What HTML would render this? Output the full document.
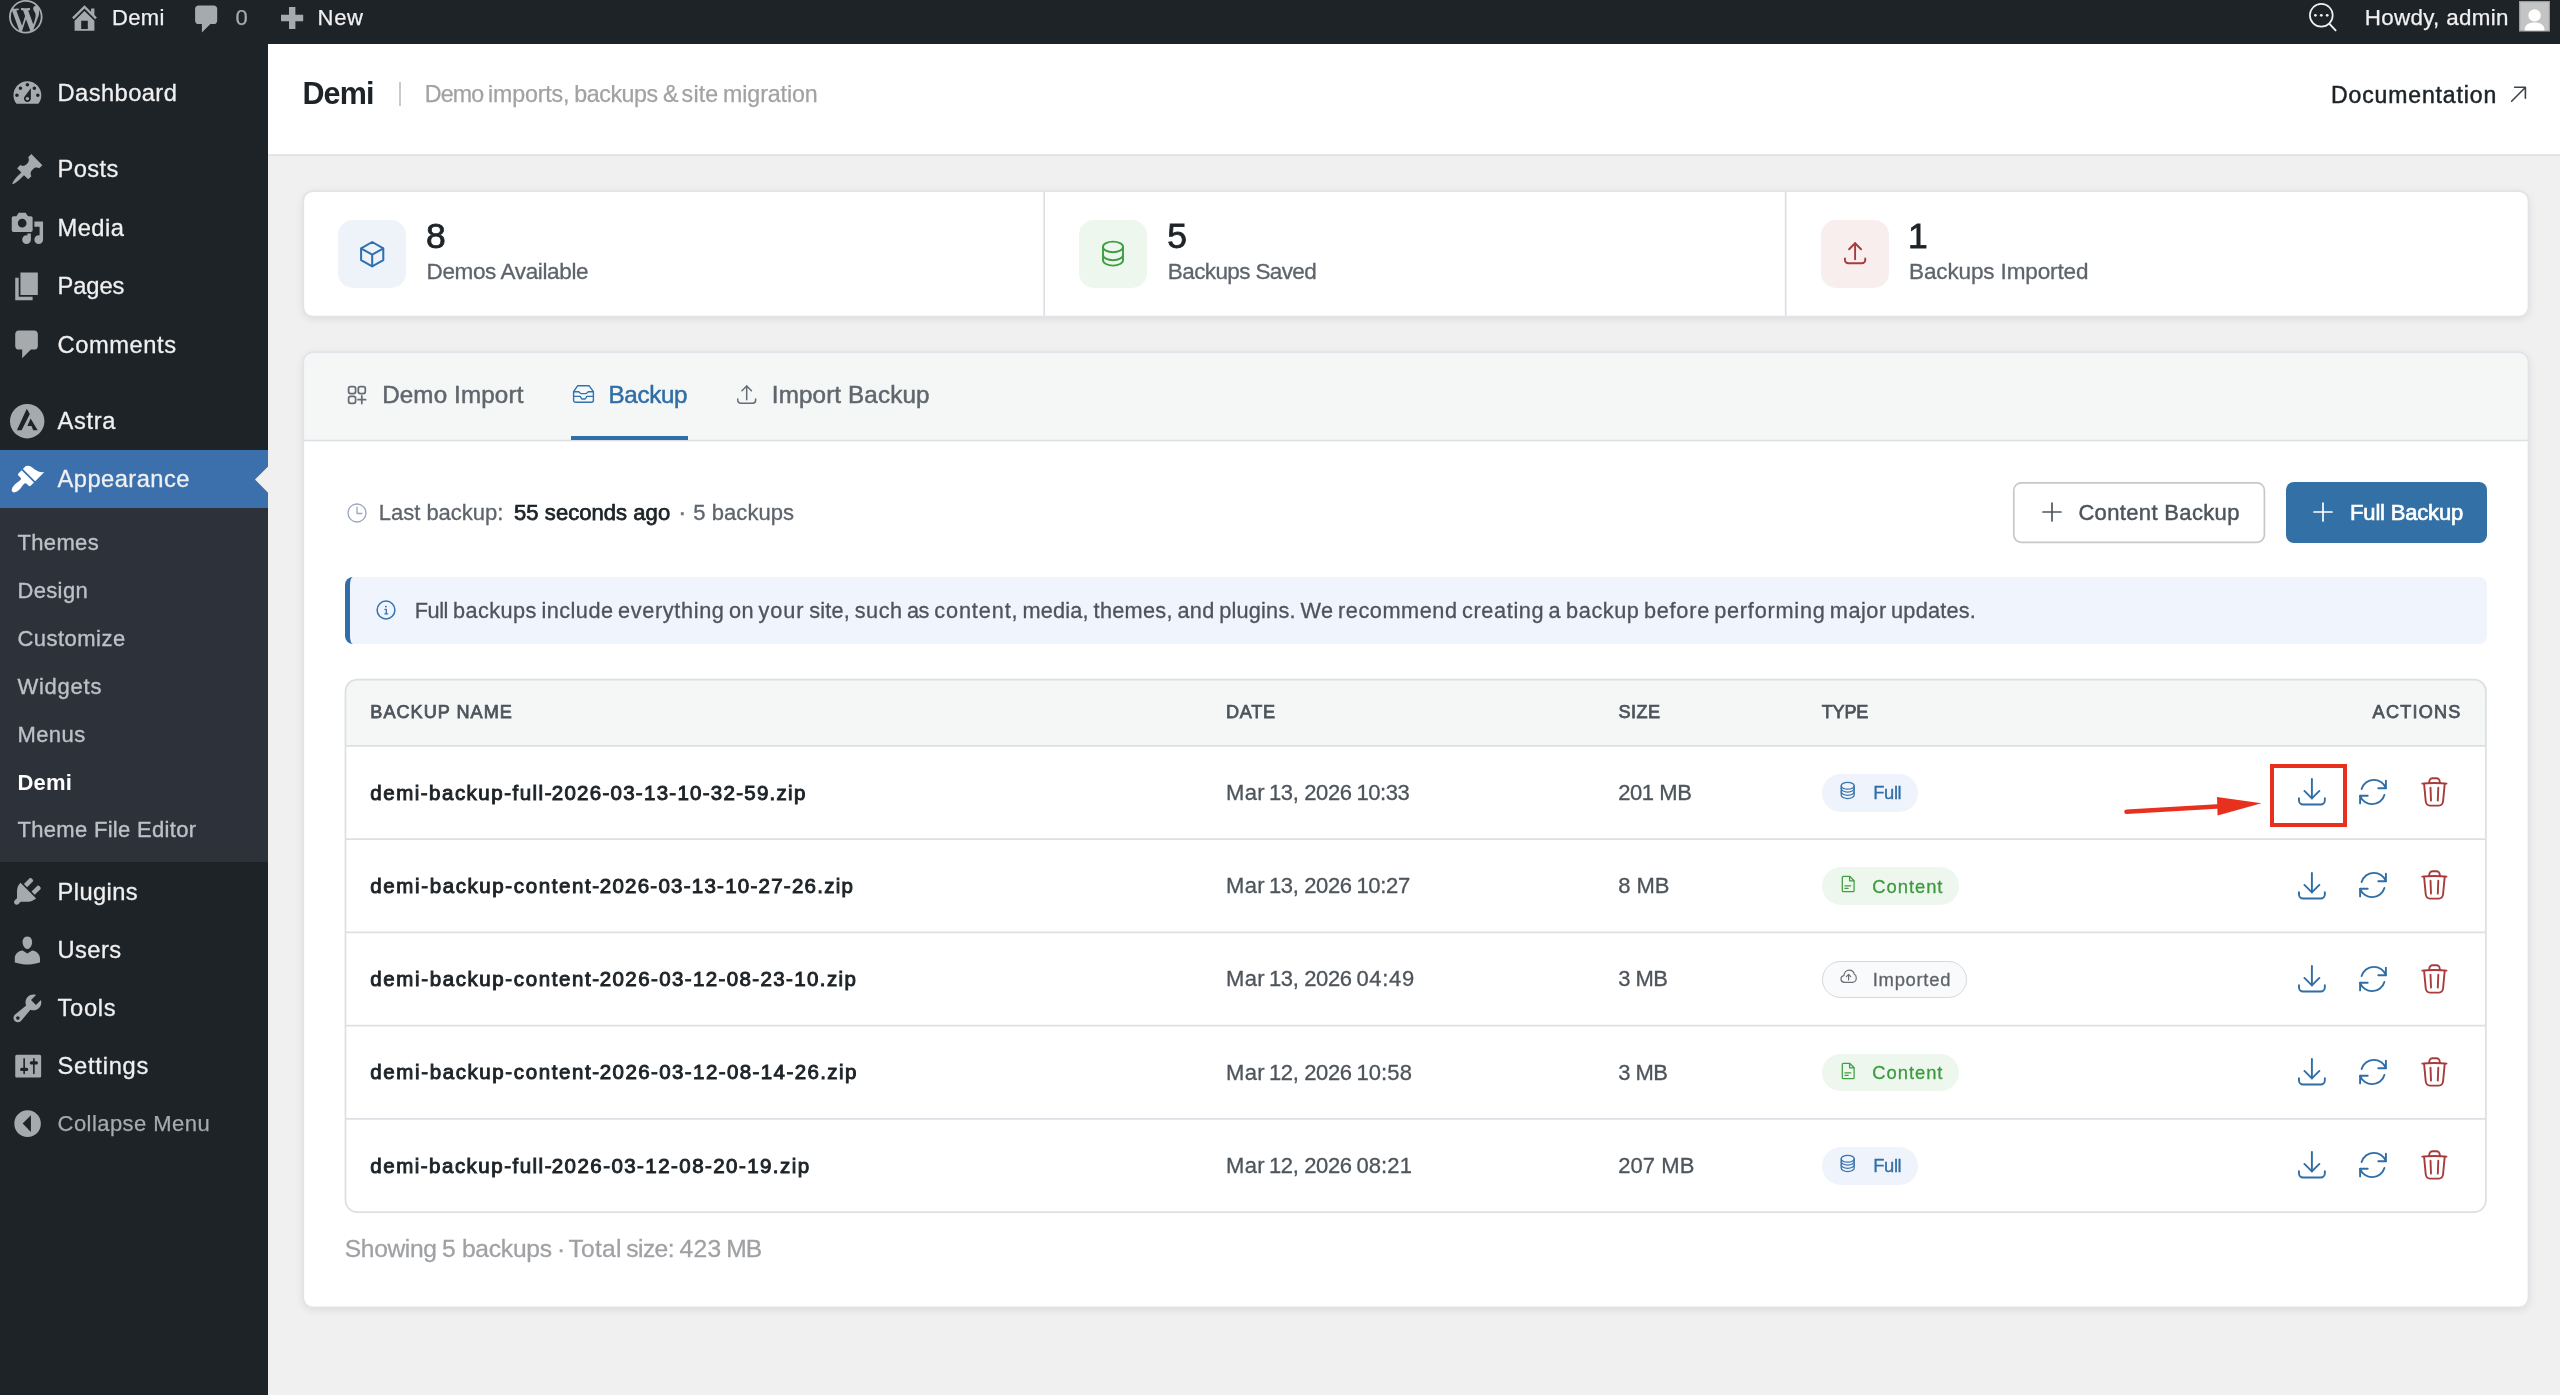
<!DOCTYPE html>
<html lang="en"><head><meta charset="utf-8"><title>Demi - Backup</title>
<style>
html,body{margin:0;padding:0;}
body{width:2560px;height:1395px;overflow:hidden;background:#f0f0f1;position:relative;font-family:"Liberation Sans", sans-serif;}
#w{position:absolute;left:0;top:0;width:2560px;height:1395px;will-change:transform;}
#w>div,#w>svg,#w>span{position:absolute;box-sizing:border-box;}
.t{white-space:nowrap;line-height:1;font-family:"Liberation Sans", sans-serif;}
svg{overflow:visible;}
</style></head><body><div id="w">
<div style="left:268px;top:44px;width:2292px;height:111px;background:#fff;"></div>
<svg style="left:0px;top:0px;" width="2560" height="1395" viewBox="0 0 2560 1395"><path d="M268 155.2 H2560" stroke="#dfe1e5" stroke-width="1.7" fill="none"/></svg>
<div style="left:303px;top:191px;width:2226px;height:126px;background:#fff;border-radius:10px;box-shadow:0 2px 8px rgba(0,0,0,.09);"></div>
<svg style="left:0px;top:0px;pointer-events:none;" width="2560" height="1395" viewBox="0 0 2560 1395"><rect x="303.3" y="191.1" width="2225.20" height="125.50" rx="9.5" fill="none" stroke="#e1e3e8" stroke-width="1.7"/></svg>
<svg style="left:0px;top:0px;" width="2560" height="1395" viewBox="0 0 2560 1395"><path d="M1044.2 192 V315.8" stroke="#dcdfe4" stroke-width="1.7" fill="none"/></svg>
<svg style="left:0px;top:0px;" width="2560" height="1395" viewBox="0 0 2560 1395"><path d="M1785.7 192 V315.8" stroke="#dcdfe4" stroke-width="1.7" fill="none"/></svg>
<div style="left:338px;top:220px;width:68px;height:68px;background:#eef3f9;border-radius:15px;"></div>
<div style="left:1079px;top:220px;width:68px;height:68px;background:#edf7ee;border-radius:15px;"></div>
<div style="left:1821px;top:220px;width:68px;height:68px;background:#f9eeee;border-radius:15px;"></div>
<div style="left:303px;top:352px;width:2226px;height:956px;background:#fff;border-radius:10px;overflow:hidden;box-shadow:0 2px 8px rgba(0,0,0,.09);"><div style="position:absolute;left:0;top:0;right:0;height:88.5px;background:#f5f7f7;"></div></div>
<svg style="left:0px;top:0px;" width="2560" height="1395" viewBox="0 0 2560 1395"><path d="M304 440.5 H2528" stroke="#dcdfe4" stroke-width="1.7" fill="none"/></svg>
<svg style="left:0px;top:0px;pointer-events:none;" width="2560" height="1395" viewBox="0 0 2560 1395"><rect x="303.3" y="352.2" width="2225.20" height="955.10" rx="9.5" fill="none" stroke="#e1e3e8" stroke-width="1.7"/></svg>
<div style="left:571px;top:436px;width:117px;height:4px;background:#2f6ea6;"></div>
<div style="left:2013px;top:482px;width:252px;height:61px;background:#fff;border-radius:8px;"></div>
<svg style="left:0px;top:0px;pointer-events:none;" width="2560" height="1395" viewBox="0 0 2560 1395"><rect x="2013.8" y="482.8" width="250.60" height="59.50" rx="7.5" fill="none" stroke="#c6c8cc" stroke-width="1.7"/></svg>
<div style="left:2286px;top:482px;width:201px;height:61px;background:#3270a5;border-radius:8px;"></div>
<div style="left:345px;top:577px;width:2142px;height:67px;background:#eff4fd;border-left:5px solid #2f6ea6;border-radius:8px;"></div>
<div style="left:345px;top:679px;width:2141.5px;height:533.5px;background:#fff;border-radius:12px;overflow:hidden;"><div style="position:absolute;left:0;top:0;right:0;height:66.9px;background:#f5f7f7;"></div></div>
<svg style="left:0px;top:0px;" width="2560" height="1395" viewBox="0 0 2560 1395"><path d="M345.46 745.9 H2485.9" stroke="#dcdfe4" stroke-width="1.7" fill="none"/></svg>
<svg style="left:0px;top:0px;" width="2560" height="1395" viewBox="0 0 2560 1395"><path d="M345.46 839.15 H2485.9" stroke="#dcdfe4" stroke-width="1.7" fill="none"/></svg>
<svg style="left:0px;top:0px;" width="2560" height="1395" viewBox="0 0 2560 1395"><path d="M345.46 932.4 H2485.9" stroke="#dcdfe4" stroke-width="1.7" fill="none"/></svg>
<svg style="left:0px;top:0px;" width="2560" height="1395" viewBox="0 0 2560 1395"><path d="M345.46 1025.65 H2485.9" stroke="#dcdfe4" stroke-width="1.7" fill="none"/></svg>
<svg style="left:0px;top:0px;" width="2560" height="1395" viewBox="0 0 2560 1395"><path d="M345.46 1118.9 H2485.9" stroke="#dcdfe4" stroke-width="1.7" fill="none"/></svg>
<svg style="left:0px;top:0px;pointer-events:none;" width="2560" height="1395" viewBox="0 0 2560 1395"><rect x="345.46" y="679.6" width="2140.44" height="532.50" rx="12" fill="none" stroke="#dcdfe4" stroke-width="1.7"/></svg>
<div style="left:0px;top:0px;width:2560px;height:44px;background:#1d2327;"></div>
<div style="left:0px;top:44px;width:268px;height:1351px;background:#1d2327;"></div>
<div style="left:0px;top:450px;width:268px;height:58px;background:#3c70ad;"></div>
<div style="left:0px;top:508px;width:268px;height:354px;background:#2d323a;"></div>
<svg style="left:254.5px;top:465.8px;" width="13.6" height="27.2" viewBox="0 0 13.6 27.2"><path d="M13.6 0 L0 13.6 L13.6 27.2 Z" fill="#f0f0f1"/></svg>
<span class="t" style="top:7.48px;font-size:22px;color:#f0f0f1;letter-spacing:0.335px;-webkit-text-stroke:0.25px #f0f0f1;left:112.09px;">Demi</span>
<span class="t" style="top:7.48px;font-size:22px;color:#a7aaad;-webkit-text-stroke:0.25px #a7aaad;left:235.39px;">0</span>
<span class="t" style="top:7.48px;font-size:22px;color:#f0f0f1;letter-spacing:0.667px;-webkit-text-stroke:0.25px #f0f0f1;left:317.59px;">New</span>
<span class="t" style="top:6.64px;font-size:22.4px;color:#f0f0f1;letter-spacing:0.333px;-webkit-text-stroke:0.25px #f0f0f1;left:2364.67px;">Howdy, admin</span>
<span class="t" style="top:82.44px;font-size:23.7px;color:#f0f0f1;letter-spacing:0.436px;-webkit-text-stroke:0.3px #f0f0f1;left:57.50px;">Dashboard</span>
<span class="t" style="top:158.44px;font-size:23.7px;color:#f0f0f1;letter-spacing:0.407px;-webkit-text-stroke:0.3px #f0f0f1;left:57.50px;">Posts</span>
<span class="t" style="top:217.14px;font-size:23.7px;color:#f0f0f1;letter-spacing:0.462px;-webkit-text-stroke:0.3px #f0f0f1;left:57.50px;">Media</span>
<span class="t" style="top:275.04px;font-size:23.7px;color:#f0f0f1;letter-spacing:-0.074px;-webkit-text-stroke:0.3px #f0f0f1;left:57.50px;">Pages</span>
<span class="t" style="top:333.54px;font-size:23.7px;color:#f0f0f1;letter-spacing:0.578px;-webkit-text-stroke:0.3px #f0f0f1;left:57.50px;">Comments</span>
<span class="t" style="top:410.04px;font-size:23.7px;color:#f0f0f1;letter-spacing:0.645px;-webkit-text-stroke:0.3px #f0f0f1;left:57.50px;">Astra</span>
<span class="t" style="top:467.74px;font-size:23.7px;color:#f0f0f1;letter-spacing:0.459px;-webkit-text-stroke:0.3px #f0f0f1;left:57.50px;">Appearance</span>
<span class="t" style="top:880.54px;font-size:23.7px;color:#f0f0f1;letter-spacing:0.412px;-webkit-text-stroke:0.3px #f0f0f1;left:57.50px;">Plugins</span>
<span class="t" style="top:938.94px;font-size:23.7px;color:#f0f0f1;letter-spacing:0.455px;-webkit-text-stroke:0.3px #f0f0f1;left:57.50px;">Users</span>
<span class="t" style="top:997.14px;font-size:23.7px;color:#f0f0f1;letter-spacing:0.695px;-webkit-text-stroke:0.3px #f0f0f1;left:57.50px;">Tools</span>
<span class="t" style="top:1055.44px;font-size:23.7px;color:#f0f0f1;letter-spacing:0.755px;-webkit-text-stroke:0.3px #f0f0f1;left:57.50px;">Settings</span>
<span class="t" style="top:1112.58px;font-size:22px;color:#a7aaad;letter-spacing:0.442px;-webkit-text-stroke:0.25px #a7aaad;left:57.59px;">Collapse Menu</span>
<span class="t" style="top:532.38px;font-size:22px;color:#bcc1c7;letter-spacing:0.373px;-webkit-text-stroke:0.35px #bcc1c7;left:17.39px;">Themes</span>
<span class="t" style="top:580.21px;font-size:22px;color:#bcc1c7;letter-spacing:0.373px;-webkit-text-stroke:0.35px #bcc1c7;left:17.39px;">Design</span>
<span class="t" style="top:628.04px;font-size:22px;color:#bcc1c7;letter-spacing:0.479px;-webkit-text-stroke:0.35px #bcc1c7;left:17.39px;">Customize</span>
<span class="t" style="top:675.87px;font-size:22px;color:#bcc1c7;letter-spacing:0.778px;-webkit-text-stroke:0.35px #bcc1c7;left:17.39px;">Widgets</span>
<span class="t" style="top:723.70px;font-size:22px;color:#bcc1c7;letter-spacing:0.451px;-webkit-text-stroke:0.35px #bcc1c7;left:17.39px;">Menus</span>
<span class="t" style="top:771.53px;font-size:22px;color:#fff;font-weight:700;letter-spacing:0.251px;left:17.39px;">Demi</span>
<span class="t" style="top:819.36px;font-size:22px;color:#bcc1c7;letter-spacing:0.320px;-webkit-text-stroke:0.35px #bcc1c7;left:17.39px;">Theme File Editor</span>
<span class="t" style="top:78.48px;font-size:30.5px;color:#1d2327;font-weight:700;letter-spacing:-0.869px;left:302.42px;">Demi</span>
<div style="left:399px;top:82px;width:1.6px;height:24px;background:#c9cacc;"></div>
<span class="t" style="top:82.86px;font-size:23.2px;color:#a1a2a4;letter-spacing:-0.800px;-webkit-text-stroke:0.25px #a1a2a4;left:424.72px;">Demo</span>
<span class="t" style="top:82.86px;font-size:23.2px;color:#a1a2a4;letter-spacing:-0.147px;-webkit-text-stroke:0.25px #a1a2a4;left:488.02px;">imports,</span>
<span class="t" style="top:82.86px;font-size:23.2px;color:#a1a2a4;letter-spacing:-0.423px;-webkit-text-stroke:0.25px #a1a2a4;left:574.32px;">backups</span>
<span class="t" style="top:82.86px;font-size:23.2px;color:#a1a2a4;-webkit-text-stroke:0.25px #a1a2a4;left:663.02px;">&amp;</span>
<span class="t" style="top:82.86px;font-size:23.2px;color:#a1a2a4;letter-spacing:0.182px;-webkit-text-stroke:0.25px #a1a2a4;left:681.62px;">site</span>
<span class="t" style="top:82.86px;font-size:23.2px;color:#a1a2a4;letter-spacing:-0.104px;-webkit-text-stroke:0.25px #a1a2a4;left:723.12px;">migration</span>
<span class="t" style="top:84.33px;font-size:23px;color:#1d2327;letter-spacing:0.877px;-webkit-text-stroke:0.5px #1d2327;left:2331.04px;">Documentation</span>
<span class="t" style="top:219.05px;font-size:35.5px;color:#1d2327;-webkit-text-stroke:0.8px #1d2327;left:425.95px;">8</span>
<span class="t" style="top:219.05px;font-size:35.5px;color:#1d2327;-webkit-text-stroke:0.8px #1d2327;left:1167.25px;">5</span>
<span class="t" style="top:219.05px;font-size:35.5px;color:#1d2327;-webkit-text-stroke:0.8px #1d2327;left:1908.05px;">1</span>
<span class="t" style="top:260.75px;font-size:22.5px;color:#5e646b;letter-spacing:-0.371px;-webkit-text-stroke:0.3px #5e646b;left:426.56px;">Demos Available</span>
<span class="t" style="top:260.75px;font-size:22.5px;color:#5e646b;letter-spacing:-0.623px;-webkit-text-stroke:0.3px #5e646b;left:1167.86px;">Backups Saved</span>
<span class="t" style="top:260.75px;font-size:22.5px;color:#5e646b;letter-spacing:-0.130px;-webkit-text-stroke:0.3px #5e646b;left:1909.06px;">Backups Imported</span>
<span class="t" style="top:382.71px;font-size:24.2px;color:#60666d;letter-spacing:0.142px;-webkit-text-stroke:0.5px #60666d;left:382.17px;">Demo Import</span>
<span class="t" style="top:382.71px;font-size:24.2px;color:#2f6ea6;letter-spacing:-0.334px;-webkit-text-stroke:0.5px #2f6ea6;left:608.47px;">Backup</span>
<span class="t" style="top:382.71px;font-size:24.2px;color:#60666d;letter-spacing:0.147px;-webkit-text-stroke:0.5px #60666d;left:771.77px;">Import Backup</span>
<span class="t" style="top:502.18px;font-size:22px;color:#5e646b;letter-spacing:-0.018px;-webkit-text-stroke:0.3px #5e646b;left:378.79px;">Last backup:</span>
<span class="t" style="top:502.18px;font-size:22px;color:#1d2327;letter-spacing:0.054px;-webkit-text-stroke:0.75px #1d2327;left:514.09px;">55 seconds ago</span>
<span class="t" style="top:500.08px;font-size:24px;color:#70757b;-webkit-text-stroke:0.5px #70757b;left:678.18px;">·</span>
<span class="t" style="top:502.18px;font-size:22px;color:#5e646b;letter-spacing:0.057px;-webkit-text-stroke:0.3px #5e646b;left:693.29px;">5 backups</span>
<span class="t" style="top:501.78px;font-size:22px;color:#4d545b;letter-spacing:0.346px;-webkit-text-stroke:0.45px #4d545b;left:2078.39px;">Content Backup</span>
<span class="t" style="top:501.78px;font-size:22px;color:#fff;letter-spacing:-0.180px;-webkit-text-stroke:0.65px #fff;left:2350.09px;">Full Backup</span>
<span class="t" style="top:599.53px;font-size:21.7px;color:#4d545b;letter-spacing:-0.450px;-webkit-text-stroke:0.3px #4d545b;left:414.81px;">Full</span>
<span class="t" style="top:599.53px;font-size:21.7px;color:#4d545b;letter-spacing:0.449px;-webkit-text-stroke:0.3px #4d545b;left:452.96px;">backups</span>
<span class="t" style="top:599.53px;font-size:21.7px;color:#4d545b;letter-spacing:0.474px;-webkit-text-stroke:0.3px #4d545b;left:541.41px;">include</span>
<span class="t" style="top:599.53px;font-size:21.7px;color:#4d545b;letter-spacing:0.657px;-webkit-text-stroke:0.3px #4d545b;left:617.96px;">everything</span>
<span class="t" style="top:599.53px;font-size:21.7px;color:#4d545b;letter-spacing:0.602px;-webkit-text-stroke:0.3px #4d545b;left:728.91px;">on</span>
<span class="t" style="top:599.53px;font-size:21.7px;color:#4d545b;letter-spacing:0.850px;-webkit-text-stroke:0.3px #4d545b;left:758.61px;">your</span>
<span class="t" style="top:599.53px;font-size:21.7px;color:#4d545b;letter-spacing:0.212px;-webkit-text-stroke:0.3px #4d545b;left:809.21px;">site,</span>
<span class="t" style="top:599.53px;font-size:21.7px;color:#4d545b;letter-spacing:0.472px;-webkit-text-stroke:0.3px #4d545b;left:854.81px;">such</span>
<span class="t" style="top:599.53px;font-size:21.7px;color:#4d545b;letter-spacing:-0.450px;-webkit-text-stroke:0.3px #4d545b;left:907.01px;">as</span>
<span class="t" style="top:599.53px;font-size:21.7px;color:#4d545b;letter-spacing:0.894px;-webkit-text-stroke:0.3px #4d545b;left:934.21px;">content,</span>
<span class="t" style="top:599.53px;font-size:21.7px;color:#4d545b;letter-spacing:0.184px;-webkit-text-stroke:0.3px #4d545b;left:1022.61px;">media,</span>
<span class="t" style="top:599.53px;font-size:21.7px;color:#4d545b;letter-spacing:0.279px;-webkit-text-stroke:0.3px #4d545b;left:1093.61px;">themes,</span>
<span class="t" style="top:599.53px;font-size:21.7px;color:#4d545b;letter-spacing:0.320px;-webkit-text-stroke:0.3px #4d545b;left:1177.41px;">and</span>
<span class="t" style="top:599.53px;font-size:21.7px;color:#4d545b;letter-spacing:0.216px;-webkit-text-stroke:0.3px #4d545b;left:1219.21px;">plugins.</span>
<span class="t" style="top:599.53px;font-size:21.7px;color:#4d545b;letter-spacing:0.387px;-webkit-text-stroke:0.3px #4d545b;left:1300.46px;">We</span>
<span class="t" style="top:599.53px;font-size:21.7px;color:#4d545b;letter-spacing:0.570px;-webkit-text-stroke:0.3px #4d545b;left:1337.96px;">recommend</span>
<span class="t" style="top:599.53px;font-size:21.7px;color:#4d545b;letter-spacing:0.639px;-webkit-text-stroke:0.3px #4d545b;left:1462.01px;">creating</span>
<span class="t" style="top:599.53px;font-size:21.7px;color:#4d545b;-webkit-text-stroke:0.3px #4d545b;left:1548.61px;">a</span>
<span class="t" style="top:599.53px;font-size:21.7px;color:#4d545b;letter-spacing:0.578px;-webkit-text-stroke:0.3px #4d545b;left:1566.11px;">backup</span>
<span class="t" style="top:599.53px;font-size:21.7px;color:#4d545b;letter-spacing:0.765px;-webkit-text-stroke:0.3px #4d545b;left:1643.91px;">before</span>
<span class="t" style="top:599.53px;font-size:21.7px;color:#4d545b;letter-spacing:0.773px;-webkit-text-stroke:0.3px #4d545b;left:1714.21px;">performing</span>
<span class="t" style="top:599.53px;font-size:21.7px;color:#4d545b;letter-spacing:0.523px;-webkit-text-stroke:0.3px #4d545b;left:1829.81px;">major</span>
<span class="t" style="top:599.53px;font-size:21.7px;color:#4d545b;letter-spacing:0.203px;-webkit-text-stroke:0.3px #4d545b;left:1891.11px;">updates.</span>
<span class="t" style="top:702.88px;font-size:18.1px;color:#4d545b;letter-spacing:1.017px;-webkit-text-stroke:0.75px #4d545b;left:370.30px;">BACKUP NAME</span>
<span class="t" style="top:702.88px;font-size:18.1px;color:#4d545b;letter-spacing:0.745px;-webkit-text-stroke:0.75px #4d545b;left:1226.00px;">DATE</span>
<span class="t" style="top:702.88px;font-size:18.1px;color:#4d545b;letter-spacing:0.446px;-webkit-text-stroke:0.75px #4d545b;left:1618.40px;">SIZE</span>
<span class="t" style="top:702.88px;font-size:18.1px;color:#4d545b;letter-spacing:-0.236px;-webkit-text-stroke:0.75px #4d545b;left:1821.80px;">TYPE</span>
<span class="t" style="top:702.88px;font-size:18.1px;color:#4d545b;letter-spacing:1.220px;-webkit-text-stroke:0.75px #4d545b;left:2372.60px;">ACTIONS</span>
<span class="t" style="top:782.65px;font-size:20.5px;color:#1d2327;letter-spacing:1.494px;-webkit-text-stroke:0.95px #1d2327;left:370.37px;">demi-backup-full-</span>
<span class="t" style="top:782.65px;font-size:20.5px;color:#1d2327;letter-spacing:1.267px;-webkit-text-stroke:0.95px #1d2327;left:551.77px;">2026-03-13-10-32-59.zip</span>
<span class="t" style="top:781.78px;font-size:22px;color:#4d545b;letter-spacing:0.330px;-webkit-text-stroke:0.3px #4d545b;left:1226.09px;">Mar</span>
<span class="t" style="top:781.78px;font-size:22px;color:#4d545b;letter-spacing:-0.370px;-webkit-text-stroke:0.3px #4d545b;left:1268.99px;">13, 2026</span>
<span class="t" style="top:781.78px;font-size:22px;color:#4d545b;letter-spacing:-0.428px;-webkit-text-stroke:0.3px #4d545b;left:1356.39px;">10:33</span>
<span class="t" style="top:781.78px;font-size:22px;color:#4d545b;letter-spacing:-0.436px;-webkit-text-stroke:0.3px #4d545b;left:1618.19px;">201 MB</span>
<span class="t" style="top:875.90px;font-size:20.5px;color:#1d2327;letter-spacing:1.604px;-webkit-text-stroke:0.95px #1d2327;left:370.37px;">demi-backup-content-</span>
<span class="t" style="top:875.90px;font-size:20.5px;color:#1d2327;letter-spacing:1.249px;-webkit-text-stroke:0.95px #1d2327;left:599.77px;">2026-03-13-10-27-26.zip</span>
<span class="t" style="top:875.03px;font-size:22px;color:#4d545b;letter-spacing:0.330px;-webkit-text-stroke:0.3px #4d545b;left:1226.09px;">Mar</span>
<span class="t" style="top:875.03px;font-size:22px;color:#4d545b;letter-spacing:-0.370px;-webkit-text-stroke:0.3px #4d545b;left:1268.99px;">13, 2026</span>
<span class="t" style="top:875.03px;font-size:22px;color:#4d545b;letter-spacing:-0.303px;-webkit-text-stroke:0.3px #4d545b;left:1356.39px;">10:27</span>
<span class="t" style="top:875.03px;font-size:22px;color:#4d545b;letter-spacing:-0.036px;-webkit-text-stroke:0.3px #4d545b;left:1618.19px;">8 MB</span>
<span class="t" style="top:969.15px;font-size:20.5px;color:#1d2327;letter-spacing:1.604px;-webkit-text-stroke:0.95px #1d2327;left:370.37px;">demi-backup-content-</span>
<span class="t" style="top:969.15px;font-size:20.5px;color:#1d2327;letter-spacing:1.386px;-webkit-text-stroke:0.95px #1d2327;left:599.77px;">2026-03-12-08-23-10.zip</span>
<span class="t" style="top:968.28px;font-size:22px;color:#4d545b;letter-spacing:0.330px;-webkit-text-stroke:0.3px #4d545b;left:1226.09px;">Mar</span>
<span class="t" style="top:968.28px;font-size:22px;color:#4d545b;letter-spacing:-0.370px;-webkit-text-stroke:0.3px #4d545b;left:1268.99px;">13, 2026</span>
<span class="t" style="top:968.28px;font-size:22px;color:#4d545b;letter-spacing:0.700px;-webkit-text-stroke:0.3px #4d545b;left:1356.39px;">04:49</span>
<span class="t" style="top:968.28px;font-size:22px;color:#4d545b;letter-spacing:-0.536px;-webkit-text-stroke:0.3px #4d545b;left:1618.19px;">3 MB</span>
<span class="t" style="top:1062.40px;font-size:20.5px;color:#1d2327;letter-spacing:1.604px;-webkit-text-stroke:0.95px #1d2327;left:370.37px;">demi-backup-content-</span>
<span class="t" style="top:1062.40px;font-size:20.5px;color:#1d2327;letter-spacing:1.408px;-webkit-text-stroke:0.95px #1d2327;left:599.77px;">2026-03-12-08-14-26.zip</span>
<span class="t" style="top:1061.53px;font-size:22px;color:#4d545b;letter-spacing:0.330px;-webkit-text-stroke:0.3px #4d545b;left:1226.09px;">Mar</span>
<span class="t" style="top:1061.53px;font-size:22px;color:#4d545b;letter-spacing:-0.370px;-webkit-text-stroke:0.3px #4d545b;left:1268.99px;">12, 2026</span>
<span class="t" style="top:1061.53px;font-size:22px;color:#4d545b;letter-spacing:0.122px;-webkit-text-stroke:0.3px #4d545b;left:1356.39px;">10:58</span>
<span class="t" style="top:1061.53px;font-size:22px;color:#4d545b;letter-spacing:-0.536px;-webkit-text-stroke:0.3px #4d545b;left:1618.19px;">3 MB</span>
<span class="t" style="top:1155.65px;font-size:20.5px;color:#1d2327;letter-spacing:1.494px;-webkit-text-stroke:0.95px #1d2327;left:370.37px;">demi-backup-full-</span>
<span class="t" style="top:1155.65px;font-size:20.5px;color:#1d2327;letter-spacing:1.440px;-webkit-text-stroke:0.95px #1d2327;left:551.77px;">2026-03-12-08-20-19.zip</span>
<span class="t" style="top:1154.78px;font-size:22px;color:#4d545b;letter-spacing:0.330px;-webkit-text-stroke:0.3px #4d545b;left:1226.09px;">Mar</span>
<span class="t" style="top:1154.78px;font-size:22px;color:#4d545b;letter-spacing:-0.370px;-webkit-text-stroke:0.3px #4d545b;left:1268.99px;">12, 2026</span>
<span class="t" style="top:1154.78px;font-size:22px;color:#4d545b;letter-spacing:0.122px;-webkit-text-stroke:0.3px #4d545b;left:1356.39px;">08:21</span>
<span class="t" style="top:1154.78px;font-size:22px;color:#4d545b;letter-spacing:0.084px;-webkit-text-stroke:0.3px #4d545b;left:1618.19px;">207 MB</span>
<span class="t" style="top:1236.88px;font-size:24.6px;color:#9fa1a4;letter-spacing:-0.350px;-webkit-text-stroke:0.3px #9fa1a4;left:344.75px;">Showing</span>
<span class="t" style="top:1236.88px;font-size:24.6px;color:#9fa1a4;-webkit-text-stroke:0.3px #9fa1a4;left:441.95px;">5</span>
<span class="t" style="top:1236.88px;font-size:24.6px;color:#9fa1a4;letter-spacing:-0.244px;-webkit-text-stroke:0.3px #9fa1a4;left:461.95px;">backups</span>
<span class="t" style="top:1236.88px;font-size:24.6px;color:#9fa1a4;-webkit-text-stroke:0.3px #9fa1a4;left:557.05px;">·</span>
<span class="t" style="top:1236.88px;font-size:24.6px;color:#9fa1a4;letter-spacing:0.248px;-webkit-text-stroke:0.3px #9fa1a4;left:568.45px;">Total</span>
<span class="t" style="top:1236.88px;font-size:24.6px;color:#9fa1a4;letter-spacing:-0.608px;-webkit-text-stroke:0.3px #9fa1a4;left:626.35px;">size:</span>
<span class="t" style="top:1236.88px;font-size:24.6px;color:#9fa1a4;letter-spacing:0.400px;-webkit-text-stroke:0.3px #9fa1a4;left:679.45px;">423</span>
<span class="t" style="top:1236.88px;font-size:24.6px;color:#9fa1a4;letter-spacing:-1.100px;-webkit-text-stroke:0.3px #9fa1a4;left:726.35px;">MB</span>
<svg style="left:9.9px;top:76.0px;" width="34.8" height="34.8" viewBox="0 0 20 20"><path d="M3.76 16h12.48c1.1-1.37 1.76-3.11 1.76-5 0-4.42-3.58-8-8-8s-8 3.58-8 8c0 1.89.66 3.63 1.76 5zM10 4c.55 0 1 .45 1 1s-.45 1-1 1-1-.45-1-1 .45-1 1-1zM6 6c.55 0 1 .45 1 1s-.45 1-1 1-1-.45-1-1 .45-1 1-1zm8 0c.55 0 1 .45 1 1s-.45 1-1 1-1-.45-1-1 .45-1 1-1zm-5.37 5.55L12 7v6c0 1.1-.9 2-2 2s-2-.9-2-2c0-.57.24-1.08.63-1.45zM4 10c.55 0 1 .45 1 1s-.45 1-1 1-1-.45-1-1 .45-1 1-1zm12 0c.55 0 1 .45 1 1s-.45 1-1 1-1-.45-1-1 .45-1 1-1zm-5 3c0-.55-.45-1-1-1s-1 .45-1 1 .45 1 1 1 1-.45 1-1z" fill="#a7aaad" fill-rule="evenodd"/></svg>
<svg style="left:9.9px;top:152.0px;" width="34.8" height="34.8" viewBox="0 0 20 20"><path d="M10.44 3.02l1.82-1.82 6.36 6.35-1.83 1.82c-1.05-.68-2.48-.57-3.41.36l-.75.75c-.92.93-1.04 2.35-.35 3.41l-1.83 1.82-2.41-2.41-2.8 2.79c-.42.42-3.38 2.71-3.8 2.29s1.86-3.39 2.28-3.81l2.79-2.79L4.1 9.36l1.83-1.82c1.05.69 2.48.57 3.4-.36l.75-.75c.93-.92 1.05-2.35.36-3.41z" fill="#a7aaad" fill-rule="evenodd"/></svg>
<svg style="left:9.9px;top:210.6px;" width="34.8" height="34.8" viewBox="0 0 20 20"><path d="M13 11V4c0-.55-.45-1-1-1h-1.67L9 1H5L3.67 3H2c-.55 0-1 .45-1 1v7c0 .55.45 1 1 1h10c.55 0 1-.45 1-1zM7 4.5c1.38 0 2.5 1.12 2.5 2.5S8.38 9.5 7 9.5 4.5 8.38 4.5 7 5.62 4.5 7 4.5zM14 6h5v10.5c0 1.38-1.12 2.5-2.5 2.5S14 17.88 14 16.5s1.12-2.5 2.5-2.5c.17 0 .34.02.5.05V9h-3V6zm-4 8.05V13h2v3.5c0 1.38-1.12 2.5-2.5 2.5S7 17.88 7 16.5 8.12 14 9.5 14c.17 0 .34.02.5.05z" fill="#a7aaad" fill-rule="evenodd"/></svg>
<svg style="left:9.9px;top:268.8px;" width="34.8" height="34.8" viewBox="0 0 20 20"><path d="M6 15V2h10v13H6zm-1 1h8v2H3V5h2v11z" fill="#a7aaad" fill-rule="evenodd"/></svg>
<svg style="left:9.9px;top:327.1px;" width="34.8" height="34.8" viewBox="0 0 20 20"><path d="M5 2h9c1.1 0 2 .9 2 2v7c0 1.1-.9 2-2 2h-2l-5 5v-5H5c-1.1 0-2-.9-2-2V4c0-1.1.9-2 2-2z" fill="#a7aaad" fill-rule="evenodd"/></svg>
<svg style="left:9.9px;top:874.1px;" width="34.8" height="34.8" viewBox="0 0 20 20"><path d="M13.11 4.36L9.87 7.6 8 5.73l3.24-3.24c.35-.34 1.05-.2 1.56.32.52.51.66 1.21.31 1.55zm-8 1.77l.91-1.12 9.01 9.01-1.19.84c-.71.71-2.63 1.16-3.82 1.16H6.14L4.9 17.26c-.59.59-1.54.59-2.12 0-.59-.58-.59-1.53 0-2.12l1.24-1.24v-3.88c0-1.13.4-3.19 1.09-3.89zm7.26 3.97l3.24-3.24c.34-.35 1.04-.21 1.55.31.52.51.66 1.21.31 1.55l-3.24 3.25z" fill="#a7aaad" fill-rule="evenodd"/></svg>
<svg style="left:9.9px;top:932.6px;" width="34.8" height="34.8" viewBox="0 0 20 20"><path d="M10 9.25c-2.27 0-2.73-3.44-2.73-3.44C7 4.02 7.82 2 9.97 2c2.16 0 2.98 2.02 2.71 3.81 0 0-.41 3.44-2.68 3.44zm0 2.57L12.72 10c2.39 0 4.52 2.33 4.52 4.53v2.49s-3.65 1.13-7.24 1.13c-3.65 0-7.24-1.13-7.24-1.13v-2.49c0-2.25 1.94-4.48 4.47-4.48z" fill="#a7aaad" fill-rule="evenodd"/></svg>
<svg style="left:9.9px;top:990.6px;" width="34.8" height="34.8" viewBox="0 0 20 20"><path d="M16.68 9.77c-1.34 1.34-3.3 1.67-4.95.99l-5.41 6.52c-.99.99-2.59.99-3.58 0s-.99-2.59 0-3.57l6.52-5.42c-.68-1.65-.35-3.61.99-4.95 1.28-1.28 3.12-1.62 4.72-1.06l-2.89 2.89 2.82 2.82 2.86-2.87c.53 1.58.18 3.39-1.08 4.65zM3.81 16.21c.4.39 1.04.39 1.43 0 .4-.4.4-1.04 0-1.43-.39-.4-1.03-.4-1.43 0-.39.39-.39 1.03 0 1.43z" fill="#a7aaad" fill-rule="evenodd"/></svg>
<svg style="left:9.9px;top:461.6px;" width="34.8" height="34.8" viewBox="0 0 20 20"><path d="M14.48 11.06L7.41 3.99l1.5-1.5c.5-.56 2.3-.47 3.51.32 1.21.8 1.43 1.28 2.91 2.1 1.18.64 2.45 1.26 4.45.85zm-.71.71L6.7 4.7 4.93 6.47c-.39.39-.39 1.02 0 1.41l1.06 1.06c.39.39.39 1.03 0 1.42-.6.6-1.43 1.11-2.21 1.69-.35.26-.7.53-1.01.84C1.43 14.23.4 16.08 1.4 17.07c.99 1 2.84-.03 4.18-1.36.31-.31.58-.66.85-1.02.57-.78 1.08-1.61 1.69-2.21.39-.39 1.02-.39 1.41 0l1.06 1.06c.39.39 1.02.39 1.41 0z" fill="#fff" fill-rule="evenodd"/></svg>
<svg style="left:10.6px;top:1107.4px;" width="33.2" height="33.2" viewBox="0 0 20 20"><path d="M10 2.02c-4.42 0-8 3.58-8 8s3.58 8 8 8 8-3.58 8-8-3.58-8-8-8zM12 15l-5-5 5-5v10z" fill="#a7aaad" fill-rule="evenodd"/></svg>
<svg style="left:11.9px;top:1050.4px;" width="32.4" height="32.4" viewBox="0 0 20 20"><path d="M18 16V4c0-.55-.45-1-1-1H3c-.55 0-1 .45-1 1v12c0 .55.45 1 1 1h14c.55 0 1-.45 1-1zM8 11h1c.55 0 1 .45 1 1s-.45 1-1 1H8v1.5c0 .28-.22.5-.5.5s-.5-.22-.5-.5V13H6c-.55 0-1-.45-1-1s.45-1 1-1h1V5.5c0-.28.22-.5.5-.5s.5.22.5.5V11zm5-2h-1c-.55 0-1-.45-1-1s.45-1 1-1h1V5.5c0-.28.22-.5.5-.5s.5.22.5.5V7h1c.55 0 1 .45 1 1s-.45 1-1 1h-1v5.5c0 .28-.22.5-.5.5s-.5-.22-.5-.5V9z" fill="#a7aaad" fill-rule="evenodd"/></svg>
<svg style="left:9.9px;top:403.6px;" width="34.4" height="34.4" viewBox="0 0 34.4 34.4"><circle cx="17.2" cy="17.2" r="17.2" fill="#a7aaad"/><path d="M6.9 26.2 L16.8 4.7 L19.8 9.9 L11.6 26.2 Z M20.6 14.4 L27.7 26.2 L23.2 26.2 L21.5 21.9 L17.4 21.9 Z" fill="#1d2327"/></svg>
<svg style="left:8.6px;top:0.0px;" width="33.6" height="33.6" viewBox="0 0 20 20"><path d="M20 10c0-5.51-4.49-10-10-10C4.48 0 0 4.49 0 10c0 5.52 4.48 10 10 10 5.51 0 10-4.48 10-10zM7.78 15.37L4.37 6.22c.55-.02 1.17-.08 1.17-.08.5-.06.44-1.13-.06-1.11 0 0-1.45.11-2.37.11-.18 0-.37 0-.58-.01C4.12 2.69 6.87 1.11 10 1.11c2.33 0 4.45.87 6.05 2.34-.68-.11-1.65.39-1.65 1.58 0 .74.45 1.36.9 2.1.35.61.55 1.36.55 2.46 0 1.49-1.4 5-1.4 5l-3.03-8.37c.54-.02.82-.17.82-.17.5-.05.44-1.25-.06-1.22 0 0-1.44.12-2.38.12-.87 0-2.33-.12-2.33-.12-.5-.03-.56 1.2-.06 1.22l.92.08 1.26 3.41zM17.41 10c.24-.64.74-1.87.43-4.25.7 1.29 1.05 2.71 1.05 4.25 0 3.29-1.73 6.24-4.4 7.78.97-2.59 1.94-5.2 2.92-7.78zM6.1 18.09C3.12 16.65 1.11 13.53 1.11 10c0-1.3.23-2.48.72-3.59C3.25 10.3 4.67 14.2 6.1 18.09zm4.03-6.63l2.58 6.98c-.86.29-1.76.45-2.71.45-.79 0-1.57-.11-2.29-.33.81-2.38 1.62-4.74 2.42-7.1z" fill="#a7aaad" fill-rule="evenodd"/></svg>
<svg style="left:68.4px;top:1.0px;" width="33" height="33" viewBox="0 0 20 20"><path d="M16 8.5l1.53 1.53-1.06 1.06L10 4.62l-6.47 6.47-1.06-1.06L10 2.5l4 4v-2h2v4zm-6-2.46l6 5.99V18H4v-5.97zM12 17v-5H8v5h4z" fill="#a7aaad" fill-rule="evenodd"/></svg>
<svg style="left:190.4px;top:1.6px;" width="34" height="34" viewBox="0 0 20 20"><path d="M5 2h9c1.1 0 2 .9 2 2v7c0 1.1-.9 2-2 2h-2l-5 5v-5H5c-1.1 0-2-.9-2-2V4c0-1.1.9-2 2-2z" fill="#a7aaad" fill-rule="evenodd"/></svg>
<svg style="left:280.5px;top:7px;" width="22.2" height="22" viewBox="0 0 22.2 22"><path d="M8 0h6.4v7.8h7.8v6.4h-7.8V22H8v-7.8H0V7.8h8z" fill="#a7aaad"/></svg>
<svg style="left:2306px;top:0px;" width="34" height="34" viewBox="0 0 34 34"><circle cx="15.3" cy="15.3" r="11.4" fill="none" stroke="#f0f0f1" stroke-width="1.7"/><path d="M23.5 23.8 L29.6 30.4" stroke="#f0f0f1" stroke-width="1.9" stroke-linecap="round"/><circle cx="9.4" cy="15.3" r="1.4" fill="#f0f0f1"/><circle cx="15.3" cy="15.3" r="1.4" fill="#f0f0f1"/><circle cx="21.2" cy="15.3" r="1.4" fill="#f0f0f1"/></svg>
<svg style="left:2519px;top:1px;" width="31" height="30.6" viewBox="0 0 31 30.6"><rect width="31" height="30.6" fill="#9a9c9e"/><rect x="1.2" y="1.2" width="28.6" height="28.2" fill="#c4c4c4"/><circle cx="15.6" cy="14.4" r="6.2" fill="#fff"/><path d="M5.6 29.4 C5.6 24 9.5 21.6 15.6 21.6 C21.7 21.6 25.6 24 25.6 29.4 Z" fill="#fff"/></svg>
<svg style="left:357.6px;top:238.6px;" width="28.4" height="30.4" viewBox="0 0 28.4 30.4"><g fill="none" stroke="#2f6eb0" stroke-width="2.0" stroke-linecap="round" stroke-linejoin="round"><path d="M14.2 3 L25.3 9.4 V21.2 L14.2 27.4 L3.1 21.2 V9.4 Z"/><path d="M3.4 9.6 L14.2 15.6 L25 9.6 M14.2 15.6 V27.2"/></g></svg>
<svg style="left:1100.9px;top:239.9px;" width="24" height="27.4" viewBox="0 0 24 27.4"><g fill="none" stroke="#3f9e41" stroke-width="1.9" stroke-linecap="round" stroke-linejoin="round"><ellipse cx="12" cy="6.9" rx="10" ry="5.3"/><path d="M2 6.9 V20.3 C2 23.2 6.5 25.6 12 25.6 C17.5 25.6 22 23.2 22 20.3 V6.9"/><path d="M2 14.9 C2 17.8 6.5 20.2 12 20.2 C17.5 20.2 22 17.8 22 14.9"/></g></svg>
<svg style="left:1843.6px;top:242.3px;" width="22.2" height="22.2" viewBox="0 0 22.2 22.2"><g fill="none" stroke="#a83b3b" stroke-width="1.9" stroke-linecap="round" stroke-linejoin="round"><path d="M11.1 1.25 V17.205"/><path d="M5.106 7.244 L11.1 1.25 L17.094 7.244"/><path d="M0.95 16.428 V17.92 a3.3299999999999996 3.3299999999999996 0 0 0 3.3299999999999996 3.3299999999999996 H17.92 a3.3299999999999996 3.3299999999999996 0 0 0 3.3299999999999996 -3.3299999999999996 V16.428"/></g></svg>
<svg style="left:346.5px;top:384.5px;" width="20" height="20" viewBox="0 0 20 20"><g fill="none" stroke="#676c74" stroke-width="1.75" stroke-linecap="round" stroke-linejoin="round"><rect x="1.6" y="1.6" width="7" height="7" rx="2"/><rect x="11.3" y="1.6" width="7" height="7" rx="2"/><rect x="1.6" y="11.3" width="7" height="7" rx="2"/><path d="M11 14.7 H18.6 M14.8 10.9 V18.5"/></g></svg>
<svg style="left:571.7px;top:384.1px;" width="23" height="20" viewBox="0 0 23 20"><g fill="none" stroke="#3373ad" stroke-width="1.4" stroke-linecap="round" stroke-linejoin="round"><path d="M1.6 7.7 L5.6 1.8 H17.2 L21.4 7.7 V16.3 a2 2 0 0 1 -2 2 H3.6 a2 2 0 0 1 -2 -2 Z"/><path d="M1.8 7.7 H6.4 C7.6 7.7 7.8 9.6 9.3 9.6 H13.7 C15.2 9.6 15.4 7.7 16.6 7.7 H21.2"/><path d="M1.8 12.4 H8.2 C8.8 12.4 8.8 15 10.3 15 H12.7 C14.2 15 14.2 12.4 14.8 12.4 H21.2"/></g></svg>
<svg style="left:737.1px;top:384.6px;" width="19.4" height="19" viewBox="0 0 19.4 19"><g fill="none" stroke="#676c74" stroke-width="1.5" stroke-linecap="round" stroke-linejoin="round"><path d="M9.7 1.05 V14.725"/><path d="M4.947 5.802999999999999 L9.7 1.05 L14.453 5.802999999999999"/><path d="M0.75 14.06 V15.34 a2.9099999999999997 2.9099999999999997 0 0 0 2.9099999999999997 2.9099999999999997 H15.739999999999998 a2.9099999999999997 2.9099999999999997 0 0 0 2.9099999999999997 -2.9099999999999997 V14.06"/></g></svg>
<svg style="left:346.9px;top:502.6px;" width="20" height="20" viewBox="0 0 20 20"><g fill="none" stroke="#99a7bf" stroke-width="1.3" stroke-linecap="round" stroke-linejoin="round"><circle cx="10" cy="10" r="9"/><path d="M10 4.2 V10.5 H14.8"/></g></svg>
<svg style="left:375.9px;top:600.3px;" width="20" height="20" viewBox="0 0 20 20"><circle cx="10" cy="10" r="8.9" fill="none" stroke="#3373ad" stroke-width="1.5"/><circle cx="9.9" cy="6.6" r="0.95" fill="#3373ad"/><path d="M8.9 9.3 H10.3 V13.6 M8.9 13.9 H11.6" fill="none" stroke="#3373ad" stroke-width="1.3" stroke-linecap="round" stroke-linejoin="round"/></svg>
<svg style="left:2041.7px;top:501.7px;" width="20" height="20" viewBox="0 0 20 20"><g fill="none" stroke="#50575e" stroke-width="1.7" stroke-linecap="round" stroke-linejoin="round"><path d="M1 10 H19 M10 1 V19"/></g></svg>
<svg style="left:2313.2px;top:501.7px;" width="20" height="20" viewBox="0 0 20 20"><g fill="none" stroke="#fff" stroke-width="1.7" stroke-linecap="round" stroke-linejoin="round"><path d="M1 10 H19 M10 1 V19"/></g></svg>
<svg style="left:2509px;top:84.6px;" width="20" height="20" viewBox="0 0 20 20"><g fill="none" stroke="#3c434a" stroke-width="1.6" stroke-linecap="round" stroke-linejoin="round"><path d="M2.6 16.2 L16.3 2.5 M5.6 2.3 H16.4 V13.2"/></g></svg>
<div style="left:1821.5px;top:773.8000000000001px;width:96.6px;height:37.8px;background:#eef3fc;border-radius:19px;"></div>
<svg style="left:1840.4px;top:781.2px;" width="15.4" height="18.6" viewBox="0 0 15.4 18.6"><g fill="none" stroke="#3a74ab" stroke-width="1.3" stroke-linecap="round" stroke-linejoin="round"><ellipse cx="7.7" cy="4.8" rx="6.5" ry="3.4"/><path d="M1.2 4.8 V14 C1.2 16 4.1 17.6 7.7 17.6 C11.3 17.6 14.2 16 14.2 14 V4.8"/><path d="M1.2 7.5 C1.2 9.5 4.1 11.1 7.7 11.1 C11.3 11.1 14.2 9.5 14.2 7.5 M1.2 10.7 C1.2 12.7 4.1 14.3 7.7 14.3 C11.3 14.3 14.2 12.7 14.2 10.7"/></g></svg>
<span class="t" style="top:784.42px;font-size:18.4px;color:#2f6ea6;letter-spacing:-0.420px;-webkit-text-stroke:0.3px #2f6ea6;left:1873.29px;">Full</span>
<div style="left:1821.5px;top:867.0500000000001px;width:137.6px;height:37.8px;background:#edf7ee;border-radius:19px;"></div>
<svg style="left:1841px;top:875.25px;" width="14.4" height="18" viewBox="0 0 14.4 18"><g fill="none" stroke="#3f9e41" stroke-width="1.25" stroke-linecap="round" stroke-linejoin="round"><path d="M1.3 2.6 a1.3 1.3 0 0 1 1.3 -1.3 H8.6 L13.1 5.8 V15.4 a1.3 1.3 0 0 1 -1.3 1.3 H2.6 a1.3 1.3 0 0 1 -1.3 -1.3 Z"/><path d="M8.6 1.5 V5.8 H12.9"/><path d="M3.9 10.8 H9.8 M3.9 13.3 H7.2"/></g></svg>
<span class="t" style="top:877.67px;font-size:18.4px;color:#3d9b3f;letter-spacing:0.960px;-webkit-text-stroke:0.3px #3d9b3f;left:1872.29px;">Content</span>
<div style="left:1821.8px;top:960.6px;width:145.4px;height:37.4px;background:#f9fafb;border:1.5px solid #d6d8dc;border-radius:19px;"></div>
<svg style="left:1839.5px;top:968.6px;" width="17.2" height="14.6" viewBox="0 0 17.2 14.6"><g fill="none" stroke="#6b6f74" stroke-width="1.2" stroke-linecap="round" stroke-linejoin="round"><path d="M4.6 13.3 C2.5 13.3 1 11.8 1 9.9 C1 8.2 2.2 6.8 3.9 6.6 C4.2 3.6 6.4 1.2 9.3 1.2 C11.8 1.2 13.8 2.9 14.3 5.3 C15.6 5.8 16.3 7.2 16.3 8.9 C16.3 11.4 14.6 13.3 12.6 13.3 Z"/><path d="M8.6 10.9 V5.6 M6.4 7.6 L8.6 5.4 L10.8 7.6"/></g></svg>
<span class="t" style="top:970.92px;font-size:18.4px;color:#5f6368;letter-spacing:0.715px;-webkit-text-stroke:0.3px #5f6368;left:1872.79px;">Imported</span>
<div style="left:1821.5px;top:1053.55px;width:137.6px;height:37.8px;background:#edf7ee;border-radius:19px;"></div>
<svg style="left:1841px;top:1061.75px;" width="14.4" height="18" viewBox="0 0 14.4 18"><g fill="none" stroke="#3f9e41" stroke-width="1.25" stroke-linecap="round" stroke-linejoin="round"><path d="M1.3 2.6 a1.3 1.3 0 0 1 1.3 -1.3 H8.6 L13.1 5.8 V15.4 a1.3 1.3 0 0 1 -1.3 1.3 H2.6 a1.3 1.3 0 0 1 -1.3 -1.3 Z"/><path d="M8.6 1.5 V5.8 H12.9"/><path d="M3.9 10.8 H9.8 M3.9 13.3 H7.2"/></g></svg>
<span class="t" style="top:1064.17px;font-size:18.4px;color:#3d9b3f;letter-spacing:0.960px;-webkit-text-stroke:0.3px #3d9b3f;left:1872.29px;">Content</span>
<div style="left:1821.5px;top:1146.8px;width:96.6px;height:37.8px;background:#eef3fc;border-radius:19px;"></div>
<svg style="left:1840.4px;top:1154.2px;" width="15.4" height="18.6" viewBox="0 0 15.4 18.6"><g fill="none" stroke="#3a74ab" stroke-width="1.3" stroke-linecap="round" stroke-linejoin="round"><ellipse cx="7.7" cy="4.8" rx="6.5" ry="3.4"/><path d="M1.2 4.8 V14 C1.2 16 4.1 17.6 7.7 17.6 C11.3 17.6 14.2 16 14.2 14 V4.8"/><path d="M1.2 7.5 C1.2 9.5 4.1 11.1 7.7 11.1 C11.3 11.1 14.2 9.5 14.2 7.5 M1.2 10.7 C1.2 12.7 4.1 14.3 7.7 14.3 C11.3 14.3 14.2 12.7 14.2 10.7"/></g></svg>
<span class="t" style="top:1157.42px;font-size:18.4px;color:#2f6ea6;letter-spacing:-0.420px;-webkit-text-stroke:0.3px #2f6ea6;left:1873.29px;">Full</span>
<svg style="left:2298.2px;top:778.4px;" width="27.8" height="27.4" viewBox="0 0 27.8 27.4"><g fill="none" stroke="#2e6da6" stroke-width="1.9" stroke-linecap="round" stroke-linejoin="round"><path d="M13.9 0.95 V20.413"/><path d="M6.393999999999999 12.907 L13.9 20.413 L21.406000000000002 12.907"/><path d="M0.95 20.276 V22.28 a4.17 4.17 0 0 0 4.17 4.17 H22.68 a4.17 4.17 0 0 0 4.17 -4.17 V20.276"/></g></svg>
<svg style="left:2358.2px;top:777.0px;" width="30" height="30" viewBox="0 0 30 30"><g fill="none" stroke="#2e6da6" stroke-width="1.9" stroke-linecap="round" stroke-linejoin="round"><g transform="translate(15 15)"><path d="M-11.4 -2.9 A12.8 12.8 0 0 1 12.9 -3.8"/><path d="M12.9 -11.4 V-3.8 H5.3"/><path d="M11.4 2.9 A12.8 12.8 0 0 1 -12.9 3.8"/><path d="M-12.9 11.4 V3.8 H-5.3"/></g></g></svg>
<svg style="left:2420px;top:776.0px;" width="29" height="32" viewBox="0 0 29 32"><g fill="none" stroke="#a83b3b" stroke-width="1.9" stroke-linecap="round" stroke-linejoin="round"><path d="M2.3 7.6 C8 6.8 21 6.8 26.5 7.6"/><path d="M9.3 7 V5.5 a3.3 3.3 0 0 1 3.3 -3.3 h3.8 a3.3 3.3 0 0 1 3.3 3.3 V7"/><path d="M4.1 7.8 L5.7 25 C6 28.2 7.4 29.6 10 29.6 H18.8 C21.4 29.6 22.8 28.2 23.1 25 L24.7 7.8"/><path d="M10.5 11.6 L11 24.6 M18.3 11.6 L17.8 24.6"/></g></svg>
<svg style="left:2298.2px;top:871.65px;" width="27.8" height="27.4" viewBox="0 0 27.8 27.4"><g fill="none" stroke="#2e6da6" stroke-width="1.9" stroke-linecap="round" stroke-linejoin="round"><path d="M13.9 0.95 V20.413"/><path d="M6.393999999999999 12.907 L13.9 20.413 L21.406000000000002 12.907"/><path d="M0.95 20.276 V22.28 a4.17 4.17 0 0 0 4.17 4.17 H22.68 a4.17 4.17 0 0 0 4.17 -4.17 V20.276"/></g></svg>
<svg style="left:2358.2px;top:870.25px;" width="30" height="30" viewBox="0 0 30 30"><g fill="none" stroke="#2e6da6" stroke-width="1.9" stroke-linecap="round" stroke-linejoin="round"><g transform="translate(15 15)"><path d="M-11.4 -2.9 A12.8 12.8 0 0 1 12.9 -3.8"/><path d="M12.9 -11.4 V-3.8 H5.3"/><path d="M11.4 2.9 A12.8 12.8 0 0 1 -12.9 3.8"/><path d="M-12.9 11.4 V3.8 H-5.3"/></g></g></svg>
<svg style="left:2420px;top:869.25px;" width="29" height="32" viewBox="0 0 29 32"><g fill="none" stroke="#a83b3b" stroke-width="1.9" stroke-linecap="round" stroke-linejoin="round"><path d="M2.3 7.6 C8 6.8 21 6.8 26.5 7.6"/><path d="M9.3 7 V5.5 a3.3 3.3 0 0 1 3.3 -3.3 h3.8 a3.3 3.3 0 0 1 3.3 3.3 V7"/><path d="M4.1 7.8 L5.7 25 C6 28.2 7.4 29.6 10 29.6 H18.8 C21.4 29.6 22.8 28.2 23.1 25 L24.7 7.8"/><path d="M10.5 11.6 L11 24.6 M18.3 11.6 L17.8 24.6"/></g></svg>
<svg style="left:2298.2px;top:964.9px;" width="27.8" height="27.4" viewBox="0 0 27.8 27.4"><g fill="none" stroke="#2e6da6" stroke-width="1.9" stroke-linecap="round" stroke-linejoin="round"><path d="M13.9 0.95 V20.413"/><path d="M6.393999999999999 12.907 L13.9 20.413 L21.406000000000002 12.907"/><path d="M0.95 20.276 V22.28 a4.17 4.17 0 0 0 4.17 4.17 H22.68 a4.17 4.17 0 0 0 4.17 -4.17 V20.276"/></g></svg>
<svg style="left:2358.2px;top:963.5px;" width="30" height="30" viewBox="0 0 30 30"><g fill="none" stroke="#2e6da6" stroke-width="1.9" stroke-linecap="round" stroke-linejoin="round"><g transform="translate(15 15)"><path d="M-11.4 -2.9 A12.8 12.8 0 0 1 12.9 -3.8"/><path d="M12.9 -11.4 V-3.8 H5.3"/><path d="M11.4 2.9 A12.8 12.8 0 0 1 -12.9 3.8"/><path d="M-12.9 11.4 V3.8 H-5.3"/></g></g></svg>
<svg style="left:2420px;top:962.5px;" width="29" height="32" viewBox="0 0 29 32"><g fill="none" stroke="#a83b3b" stroke-width="1.9" stroke-linecap="round" stroke-linejoin="round"><path d="M2.3 7.6 C8 6.8 21 6.8 26.5 7.6"/><path d="M9.3 7 V5.5 a3.3 3.3 0 0 1 3.3 -3.3 h3.8 a3.3 3.3 0 0 1 3.3 3.3 V7"/><path d="M4.1 7.8 L5.7 25 C6 28.2 7.4 29.6 10 29.6 H18.8 C21.4 29.6 22.8 28.2 23.1 25 L24.7 7.8"/><path d="M10.5 11.6 L11 24.6 M18.3 11.6 L17.8 24.6"/></g></svg>
<svg style="left:2298.2px;top:1058.15px;" width="27.8" height="27.4" viewBox="0 0 27.8 27.4"><g fill="none" stroke="#2e6da6" stroke-width="1.9" stroke-linecap="round" stroke-linejoin="round"><path d="M13.9 0.95 V20.413"/><path d="M6.393999999999999 12.907 L13.9 20.413 L21.406000000000002 12.907"/><path d="M0.95 20.276 V22.28 a4.17 4.17 0 0 0 4.17 4.17 H22.68 a4.17 4.17 0 0 0 4.17 -4.17 V20.276"/></g></svg>
<svg style="left:2358.2px;top:1056.75px;" width="30" height="30" viewBox="0 0 30 30"><g fill="none" stroke="#2e6da6" stroke-width="1.9" stroke-linecap="round" stroke-linejoin="round"><g transform="translate(15 15)"><path d="M-11.4 -2.9 A12.8 12.8 0 0 1 12.9 -3.8"/><path d="M12.9 -11.4 V-3.8 H5.3"/><path d="M11.4 2.9 A12.8 12.8 0 0 1 -12.9 3.8"/><path d="M-12.9 11.4 V3.8 H-5.3"/></g></g></svg>
<svg style="left:2420px;top:1055.75px;" width="29" height="32" viewBox="0 0 29 32"><g fill="none" stroke="#a83b3b" stroke-width="1.9" stroke-linecap="round" stroke-linejoin="round"><path d="M2.3 7.6 C8 6.8 21 6.8 26.5 7.6"/><path d="M9.3 7 V5.5 a3.3 3.3 0 0 1 3.3 -3.3 h3.8 a3.3 3.3 0 0 1 3.3 3.3 V7"/><path d="M4.1 7.8 L5.7 25 C6 28.2 7.4 29.6 10 29.6 H18.8 C21.4 29.6 22.8 28.2 23.1 25 L24.7 7.8"/><path d="M10.5 11.6 L11 24.6 M18.3 11.6 L17.8 24.6"/></g></svg>
<svg style="left:2298.2px;top:1151.4px;" width="27.8" height="27.4" viewBox="0 0 27.8 27.4"><g fill="none" stroke="#2e6da6" stroke-width="1.9" stroke-linecap="round" stroke-linejoin="round"><path d="M13.9 0.95 V20.413"/><path d="M6.393999999999999 12.907 L13.9 20.413 L21.406000000000002 12.907"/><path d="M0.95 20.276 V22.28 a4.17 4.17 0 0 0 4.17 4.17 H22.68 a4.17 4.17 0 0 0 4.17 -4.17 V20.276"/></g></svg>
<svg style="left:2358.2px;top:1150.0px;" width="30" height="30" viewBox="0 0 30 30"><g fill="none" stroke="#2e6da6" stroke-width="1.9" stroke-linecap="round" stroke-linejoin="round"><g transform="translate(15 15)"><path d="M-11.4 -2.9 A12.8 12.8 0 0 1 12.9 -3.8"/><path d="M12.9 -11.4 V-3.8 H5.3"/><path d="M11.4 2.9 A12.8 12.8 0 0 1 -12.9 3.8"/><path d="M-12.9 11.4 V3.8 H-5.3"/></g></g></svg>
<svg style="left:2420px;top:1149.0px;" width="29" height="32" viewBox="0 0 29 32"><g fill="none" stroke="#a83b3b" stroke-width="1.9" stroke-linecap="round" stroke-linejoin="round"><path d="M2.3 7.6 C8 6.8 21 6.8 26.5 7.6"/><path d="M9.3 7 V5.5 a3.3 3.3 0 0 1 3.3 -3.3 h3.8 a3.3 3.3 0 0 1 3.3 3.3 V7"/><path d="M4.1 7.8 L5.7 25 C6 28.2 7.4 29.6 10 29.6 H18.8 C21.4 29.6 22.8 28.2 23.1 25 L24.7 7.8"/><path d="M10.5 11.6 L11 24.6 M18.3 11.6 L17.8 24.6"/></g></svg>
<div style="left:2270.4px;top:764.3px;width:76.2px;height:62.4px;border:4.8px solid #e8301f;"></div>
<svg style="left:2118px;top:790px;" width="150" height="30" viewBox="0 0 150 30"><path d="M8.5 21.7 L103 16.3" stroke="#e8301f" stroke-width="4.6" stroke-linecap="round" fill="none"/><path d="M99 7 L143.5 13.2 L99.6 25.4 Z" fill="#e8301f"/></svg>
</div></body></html>
